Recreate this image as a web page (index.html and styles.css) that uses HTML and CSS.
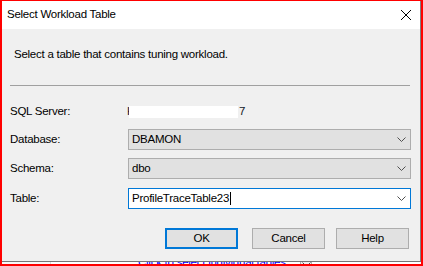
FILE: index.html
```html
<!DOCTYPE html>
<html>
<head>
<meta charset="utf-8">
<link rel="stylesheet" href="styles.css">
</head>
<body>
<div class="screen">
  <div class="dialog">
    <div class="titlebar">
      <span class="title">Select Workload Table</span>
      <svg class="close" width="10" height="10" viewBox="0 0 10 10"><path d="M0 0 L10 10 M10 0 L0 10" stroke="#000" stroke-width="1" fill="none"/></svg>
    </div>
    <div class="content">
      <p class="intro">Select a table that contains tuning workload.</p>
      <div class="sep"></div>
      <div class="row row-server">
        <span class="label">SQL Server:</span>
        <span class="server"><span class="srv-h">H</span><span class="redact"></span><span class="srv-end">7</span></span>
      </div>
      <div class="row row-db">
        <span class="label">Database:</span>
        <div class="combo"><span class="val">DBAMON</span><svg class="chev" width="9" height="5" viewBox="0 0 9 5"><polyline points="0.5,0.5 4.5,4.5 8.5,0.5" fill="none" stroke="#505050" stroke-width="1"/></svg></div>
      </div>
      <div class="row row-schema">
        <span class="label">Schema:</span>
        <div class="combo"><span class="val">dbo</span><svg class="chev" width="9" height="5" viewBox="0 0 9 5"><polyline points="0.5,0.5 4.5,4.5 8.5,0.5" fill="none" stroke="#505050" stroke-width="1"/></svg></div>
      </div>
      <div class="row row-table">
        <span class="label">Table:</span>
        <div class="combo combo-edit"><span class="val">ProfileTraceTable23</span><span class="caret"></span><svg class="chev" width="9" height="5" viewBox="0 0 9 5"><polyline points="0.5,0.5 4.5,4.5 8.5,0.5" fill="none" stroke="#505050" stroke-width="1"/></svg></div>
      </div>
      <div class="buttons">
        <div class="btn btn-ok">OK</div>
        <div class="btn btn-cancel">Cancel</div>
        <div class="btn btn-help">Help</div>
      </div>
    </div>
  </div>
  <div class="under">
    <div class="under-left"></div>
    <a class="link">Click to select individual tables</a>
    <div class="mini-drop"><svg width="9" height="5" viewBox="0 0 9 5"><polyline points="0.5,0.5 4.5,4.5 8.5,0.5" fill="none" stroke="#505050" stroke-width="1"/></svg></div>
  </div>
  <div class="highlight"></div>
</div>
</body>
</html>
```

FILE: styles.css
```css
body {
  margin: 0;
  width: 423px;
  height: 266px;
  overflow: hidden;
  background: #fff;
  font-family: "Liberation Sans", Arial, sans-serif;
  font-size: 11.5px;
  letter-spacing: -0.25px;
  color: #000;
}

.screen {
  position: relative;
  width: 423px;
  height: 266px;
}

.dialog {
  width: 421px;
  height: 262px;
  box-sizing: border-box;
  border-right: 1px solid #808080;
  border-bottom: 1px solid #767676;
  background: #f0f0f0;
  display: flex;
  flex-direction: column;
}

.titlebar {
  flex: none;
  height: 29px;
  background: #fff;
  display: flex;
  align-items: center;
  justify-content: space-between;
  padding: 0 9px 0 7px;
  line-height: 15px;
}

.close {
  display: block;
}

.content {
  flex: 1;
  padding: 0 10px;
  display: flex;
  flex-direction: column;
}

.intro {
  margin: 18px 0 0 4px;
  line-height: 15px;
}

.sep {
  margin-top: 23px;
  height: 1px;
  background: #a0a0a0;
}

.row {
  display: grid;
  grid-template-columns: 118px 283px;
  align-items: center;
  line-height: 15px;
}

.row-server {
  margin-top: 18px;
  height: 12px;
}

.row-db {
  margin-top: 13px;
}

.row-schema {
  margin-top: 8px;
}

.row-table {
  margin-top: 9px;
}

.server {
  display: flex;
  align-items: center;
  height: 12px;
  color: #101828;
}

.srv-h {
  display: inline-block;
  width: 2px;
  overflow: hidden;
  margin-left: -1px;
}

.redact {
  display: inline-block;
  width: 109px;
  height: 12px;
  background: #fff;
}

.srv-end {
  margin-left: 1px;
}

.combo {
  box-sizing: border-box;
  height: 21px;
  border: 1px solid #adadad;
  background: #e1e1e1;
  display: flex;
  align-items: center;
  padding: 0 4px 0 3px;
}

.combo .val {
  flex: none;
}

.combo .chev {
  margin-left: auto;
  display: block;
}

.combo-edit {
  background: #fff;
  border-color: #0078d7;
}

.caret {
  width: 1px;
  height: 13px;
  background: #000;
  margin-left: 1px;
}

.buttons {
  display: flex;
  margin-top: 19px;
}

.btn {
  box-sizing: border-box;
  width: 73px;
  height: 21px;
  border: 1px solid #adadad;
  background: #e1e1e1;
  display: flex;
  align-items: center;
  justify-content: center;
  line-height: 15px;
}

.btn-ok {
  margin-left: 155px;
  border: 2px solid #0078d7;
}

.btn-cancel {
  margin-left: 14px;
}

.btn-help {
  margin-left: 11px;
}

.under {
  height: 4px;
  overflow: hidden;
  display: flex;
  background: #fff;
}

.under-left {
  width: 50px;
  background: #f7f7f7;
  border-right: 1px solid #d9d9d9;
  flex: none;
}

.link {
  margin-left: 87px;
  margin-top: -7px;
  color: #0000ff;
  text-decoration: underline;
  line-height: 15px;
  white-space: nowrap;
}

.mini-drop {
  margin-left: 14px;
  width: 12px;
  height: 10px;
  box-sizing: border-box;
  border: 1px solid #adadad;
  border-top: none;
  background: #f0f0f0;
  padding: 0 0 0 1px;
}

.mini-drop svg {
  display: block;
}

.highlight {
  position: absolute;
  left: 0;
  top: -1px;
  width: 423px;
  height: 267px;
  box-sizing: border-box;
  border: 2px solid #ff0000;
  pointer-events: none;
}
```
